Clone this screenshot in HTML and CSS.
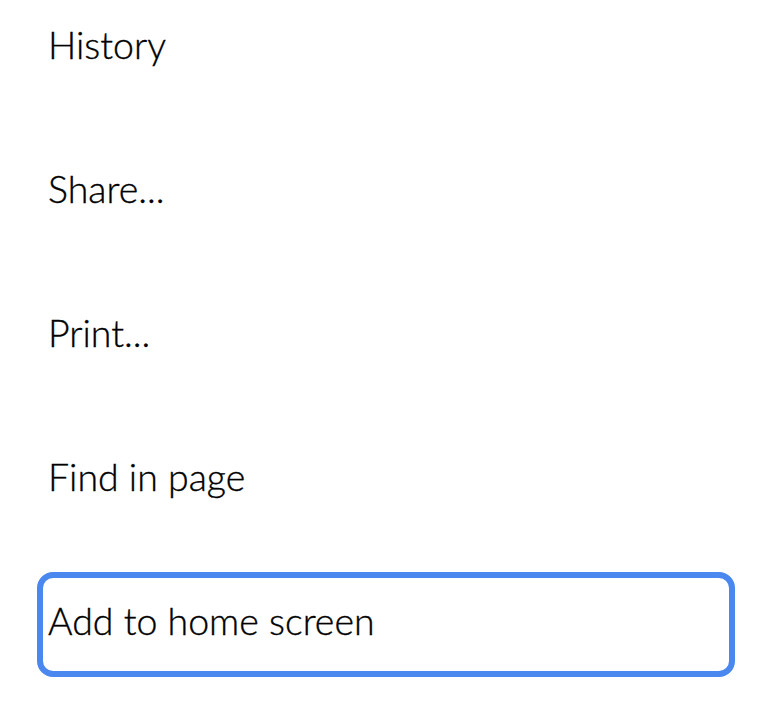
FILE: index.html
```html
<!DOCTYPE html>
<html lang="en">
<head>
<meta charset="utf-8">
<title>Menu</title>
<link rel="stylesheet" href="styles.css">
</head>
<body>
<ul class="menu">
  <li class="item">History</li>
  <li class="item">Share...</li>
  <li class="item">Print...</li>
  <li class="item">Find in page</li>
  <li class="item is-focused">Add to home screen</li>
</ul>
</body>
</html>
```
FILE: styles.css
```css
html, body {
  margin: 0;
  padding: 0;
  background: #ffffff;
}
body {
  width: 773px;
  height: 706px;
  overflow: hidden;
  font-family: "Lato", "Noto Sans", sans-serif;
  color: #000000;
}
.menu {
  list-style: none;
  margin: -4px 0 0 0;
  padding: 0 38px 0 37px;
  display: flex;
  flex-direction: column;
  gap: 39px;
}
.item {
  box-sizing: border-box;
  height: 105px;
  border: 6px solid transparent;
  border-radius: 16px;
  padding: 0 0 8px 5px;
  display: flex;
  align-items: center;
  font-size: 37.5px;
  font-weight: 300;
  line-height: 1;
  -webkit-text-stroke: 0.35px #000000;
}
.is-focused {
  border-color: #4a87ef;
}
```
